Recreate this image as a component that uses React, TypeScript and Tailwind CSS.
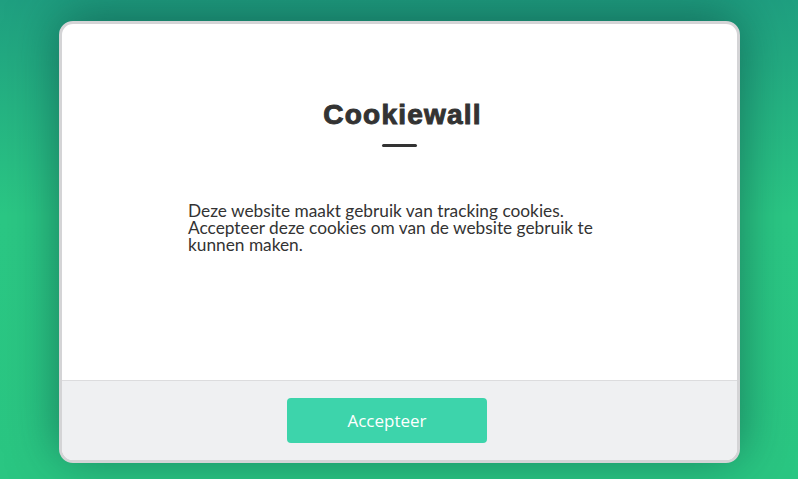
export default function App() {
  return (
    <div className="w-[798px] h-[479px] overflow-hidden bg-[linear-gradient(180deg,#1f9f80_0%,#2bc784_45%,#2ac682_100%)] flex items-start justify-center pt-[21px]">
      <div className="w-[681px] h-[442px] rounded-[14px] border-[3px] border-[#d4d4d6] bg-white flex flex-col overflow-hidden shadow-[0_-6px_50px_rgba(10,60,60,0.55)]">
        <div className="flex-1 flex flex-col items-center pt-[75px]">
          <h1 className="ml-[7px] font-['Liberation_Sans',Arial,sans-serif] font-bold text-[28px] leading-[32px] text-[#333] tracking-[1.2px] [-webkit-text-stroke:1px_#333]">
            Cookiewall
          </h1>
          <div className="w-[35px] h-[3px] bg-[#333] mt-[13px] rounded-full" />
          <p className="w-[422px] mt-[55px] font-['Lato',sans-serif] text-[17.3px] leading-[17px] text-[#333]">
            Deze website maakt gebruik van tracking cookies. Accepteer deze cookies om van de website gebruik te kunnen maken.
          </p>
        </div>
        <div className="h-[80px] shrink-0 border-t border-[#dcdcde] bg-[#eff0f2] flex items-center justify-center pr-[24px]">
          <button className="w-[200px] h-[45px] rounded-[4px] bg-[#3dd4ab] text-white font-['Open_Sans',sans-serif] text-[17px]">
            Accepteer
          </button>
        </div>
      </div>
    </div>
  );
}
